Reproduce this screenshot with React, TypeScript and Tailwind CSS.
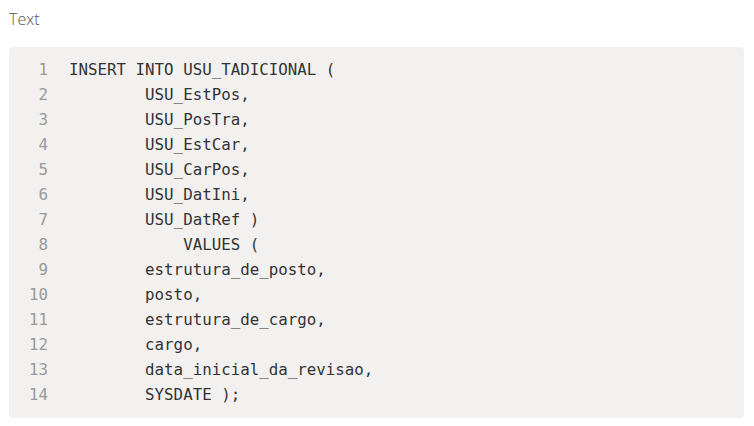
const lines = [
  "INSERT INTO USU_TADICIONAL (",
  "        USU_EstPos,",
  "        USU_PosTra,",
  "        USU_EstCar,",
  "        USU_CarPos,",
  "        USU_DatIni,",
  "        USU_DatRef )",
  "            VALUES (",
  "        estrutura_de_posto,",
  "        posto,",
  "        estrutura_de_cargo,",
  "        cargo,",
  "        data_inicial_da_revisao,",
  "        SYSDATE );",
];

export default function App() {
  return (
    <div className="w-[754px] h-[426px] bg-white pl-[9px] pr-[10px] pt-[8px]">
      <div className="text-[16px] leading-[22px] font-light text-[#555555] font-['Open_Sans',sans-serif]">
        Text
      </div>
      <div className="mt-[17px] rounded-[4px] bg-[#f2f1f0] pt-[10px] pb-[11px] pl-[20px] font-['DejaVu_Sans_Mono',monospace] text-[15.8px] leading-[25px]">
        {lines.map((line, i) => (
          <div key={i} className="flex">
            <span className="w-[19px] text-right text-[#999]">{i + 1}</span>
            <span className="ml-[21px] whitespace-pre text-[#333]">{line}</span>
          </div>
        ))}
      </div>
    </div>
  );
}
